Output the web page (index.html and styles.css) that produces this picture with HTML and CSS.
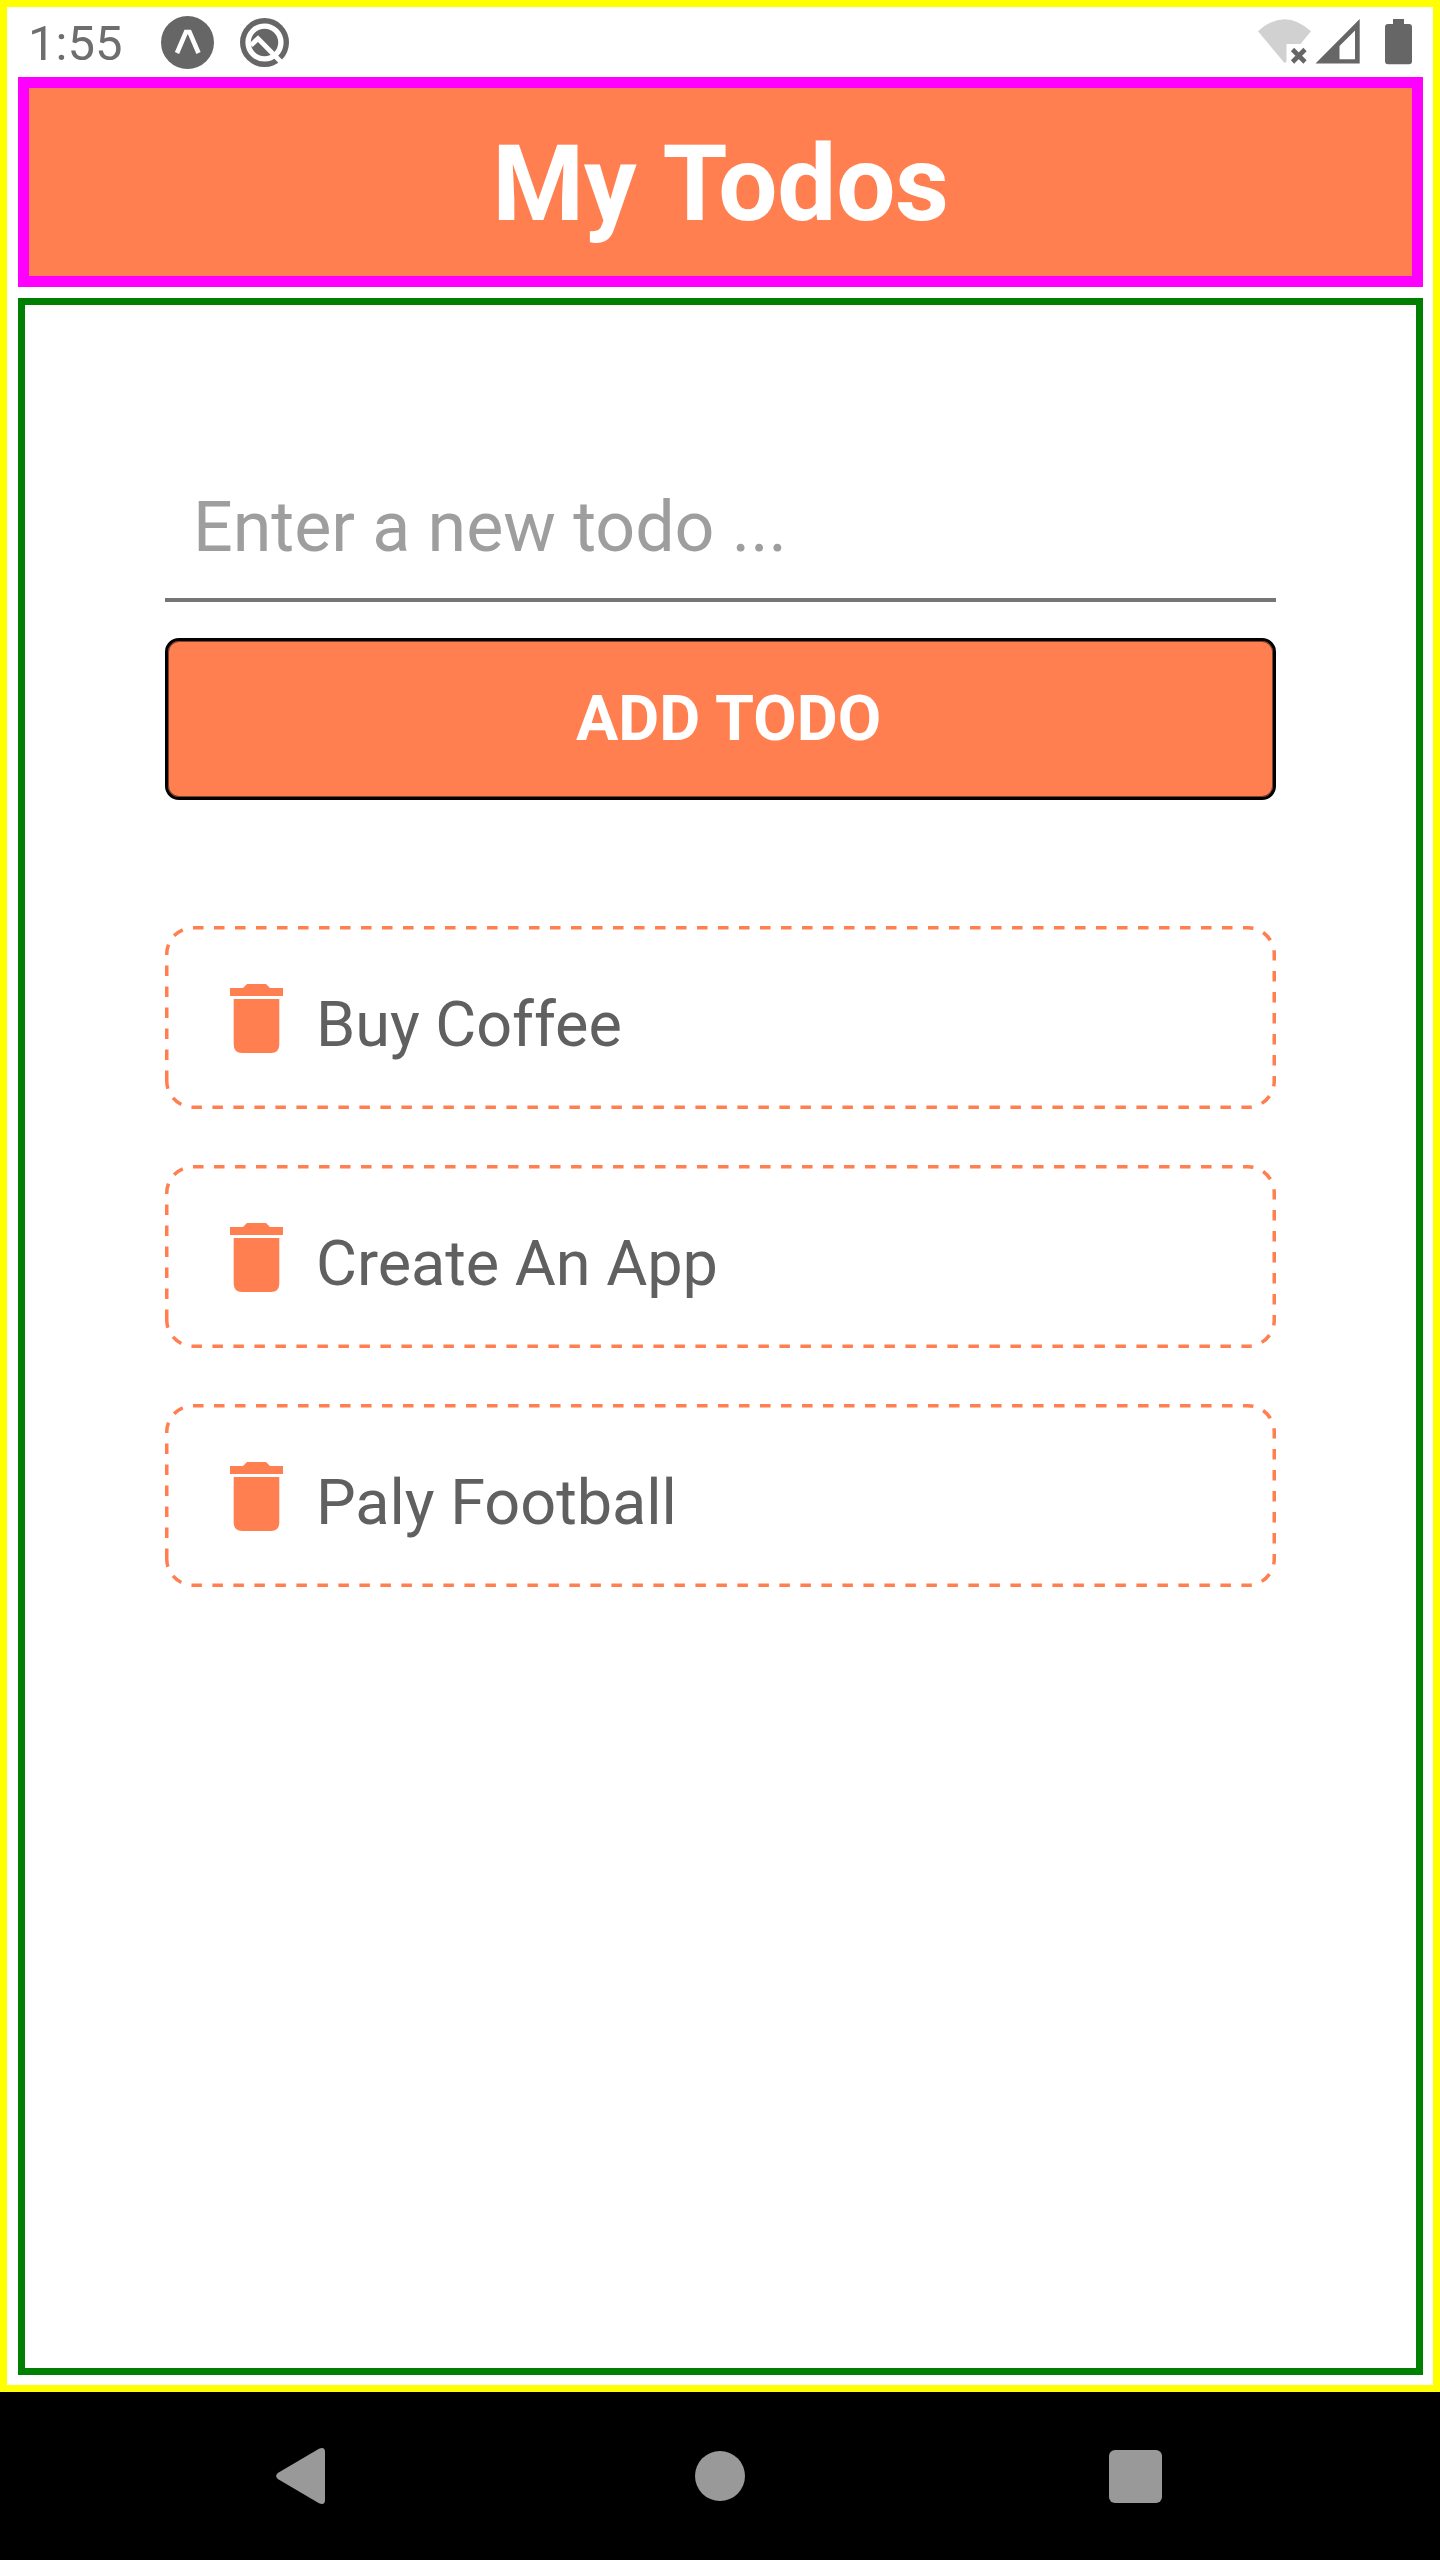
FILE: index.html
```html
<!DOCTYPE html>
<html lang="en">
<head>
<meta charset="utf-8">
<title>My Todos</title>
<link rel="stylesheet" href="styles.css">
</head>
<body>
<svg class="defs" width="0" height="0" aria-hidden="true">
  <symbol id="dash" viewBox="0 0 1111 183">
    <path d="M1.75 155V28A26.25 26.25 0 0 1 28 1.75H1083A26.25 26.25 0 0 1 1109.25 28V155A26.25 26.25 0 0 1 1083 181.25H28A26.25 26.25 0 0 1 1.75 155" fill="none" stroke="coral" stroke-width="3.5" stroke-dasharray="10.5 10.5"/>
  </symbol>
  <symbol id="trash" viewBox="0 0 53 69">
    <path d="M0 4H13L17 0H36L40 4H53V12H0ZM3.7 15H49.3V60.500Q49.300 69 41 69H12Q3.700 69 3.700 60.500Z" fill="coral"/>
  </symbol>
</svg>
<div class="app">
  <div class="status">
    <span class="clock">1:55</span>
    <svg class="expo" viewBox="0 0 53 53"><circle cx="26.500" cy="26.500" r="26.500" fill="#666"/><path d="M16 37L25 16H28.500L37.500 37" fill="none" stroke="#fff" stroke-width="4.600"/></svg>
    <svg class="quick" viewBox="0 0 49 49"><circle cx="24.500" cy="24.500" r="24.500" fill="#666"/><circle cx="24.500" cy="24.500" r="16.400" fill="none" stroke="#fff" stroke-width="5.400"/><path d="M11 27.200L18 20.500L42 45" fill="none" stroke="#fff" stroke-width="4.800"/></svg>
    <svg class="signals" viewBox="0 0 155 46">
      <path d="M0 12.300Q26.500 -12 53 12.300L42.500 25H28.500V42.500L26.500 44Z" fill="#d1d1d1"/>
      <path d="M34.500 30.500L47 43M47 30.500L34.500 43" stroke="#666" stroke-width="4.600"/>
      <path fill-rule="evenodd" d="M57.500 44.500L101.700 0V44.500ZM81.500 27V40.200H97V11.500Z" fill="#666"/>
      <path d="M135 0H146V5H151Q154 5 154 8V42Q154 45.300 151 45.300H130Q127 45.300 127 42V8Q127 5 130 5H135Z" fill="#666"/>
    </svg>
  </div>
  <header class="header"><h1>My Todos</h1></header>
  <main class="content">
    <div class="field">Enter a new todo ...</div>
    <div class="add">ADD TODO</div>
    <div class="list">
      <div class="item"><svg class="outline"><use href="#dash"/></svg><svg class="bin"><use href="#trash"/></svg><span>Buy Coffee</span></div>
      <div class="item"><svg class="outline"><use href="#dash"/></svg><svg class="bin"><use href="#trash"/></svg><span>Create An App</span></div>
      <div class="item"><svg class="outline"><use href="#dash"/></svg><svg class="bin"><use href="#trash"/></svg><span>Paly Football</span></div>
    </div>
  </main>
</div>
<nav class="nav">
  <svg class="back" viewBox="0 0 49 56"><path d="M1.800 25L43 .8Q49 -1.500 49 4V52Q49 57.500 43 55.200L1.800 31Q-1.500 28 1.800 25Z" fill="#999"/></svg>
  <span class="home"></span>
  <span class="recent"></span>
</nav>
</body>
</html>
```
FILE: styles.css
```css
* { box-sizing: border-box; }
body {
  margin: 0;
  width: 1440px;
  height: 2560px;
  background: #fff;
  font-family: Roboto, sans-serif;
}
svg { display: block; flex: none; }
.defs { position: absolute; }
.app {
  height: 2392px;
  border: 7px solid #ff0;
  padding: 0 10px 10px 11px;
  display: flex;
  flex-direction: column;
}
.status {
  height: 70px;
  flex: none;
  display: flex;
  align-items: flex-start;
  color: #6e6e6e;
}
.clock {
  width: 143px;
  padding: 8px 0 0 10px;
  font-size: 49px;
  line-height: 57px;
}
.expo { width: 53px; height: 53px; margin-top: 9px; }
.quick { width: 49px; height: 49px; margin: 11px 0 0 26px; }
.signals { width: 155px; height: 46px; margin: 12px 10px 0 auto; }
.header {
  height: 210px;
  flex: none;
  border: 11px solid #f0f;
  background: coral;
  display: flex;
  justify-content: center;
  padding-top: 35px;
}
h1 {
  margin: 0;
  color: #fff;
  font-size: 105px;
  line-height: 123px;
  font-weight: 700;
  letter-spacing: -.3px;
  word-spacing: 3px;
}
.content {
  flex: 1;
  margin-top: 11px;
  border: 7px solid green;
  padding: 140px 140px 0;
}
.field {
  height: 157px;
  border-bottom: 4px solid #757575;
  padding: 41px 28px 0;
  color: #9e9e9e;
  font-size: 70px;
  line-height: 82px;
  letter-spacing: -.05px;
}
.add {
  height: 162px;
  margin-top: 36px;
  border: 3px solid #000;
  border-radius: 14px;
  background: coral;
  box-shadow: inset 0 0 0 1px rgba(0, 0, 0, .5);
  color: #fff;
  font-size: 63px;
  line-height: 74px;
  font-weight: 700;
  text-align: center;
  word-spacing: 1px;
  padding: 41px 0 0 16px;
}
.list {
  margin-top: 126px;
  display: flex;
  flex-direction: column;
  gap: 56px;
}
.item {
  position: relative;
  height: 183px;
  display: flex;
  padding: 58px 65px 0;
  color: #606060;
  font-size: 63px;
  line-height: 74px;
}
.outline { position: absolute; inset: 0; width: 1111px; height: 183px; }
.bin { width: 53px; height: 69px; }
.item span { margin: 4px 0 0 33px; letter-spacing: -.04px; }
.nav {
  height: 168px;
  background: #000;
  display: flex;
  align-items: center;
  padding-left: 276px;
}
.back { width: 49px; height: 56px; }
.home { width: 50px; height: 50px; border-radius: 50%; background: #999; margin-left: 370px; }
.recent { width: 53px; height: 53px; border-radius: 6px; background: #999; margin-left: 364px; }
```
